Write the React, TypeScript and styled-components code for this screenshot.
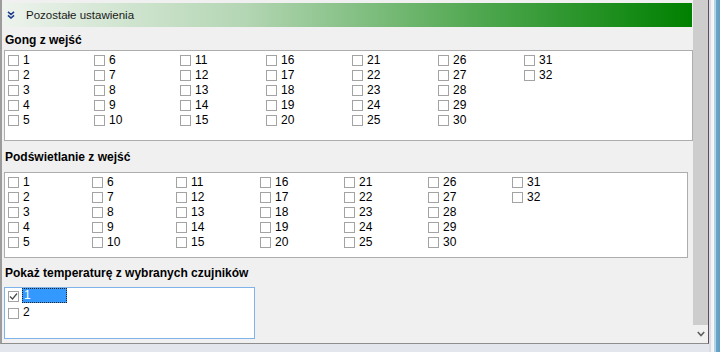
import React from "react";
import styled, { createGlobalStyle } from "styled-components";

const GlobalStyle = createGlobalStyle`
  html, body {
    margin: 0;
    padding: 0;
    background: #e3e6ec;
  }
  body {
    font-family: "Liberation Sans", Arial, sans-serif;
    font-size: 12px;
    color: #000;
  }
`;

const Window = styled.div`
  width: 720px;
  height: 352px;
  display: flex;
  overflow: hidden;
`;

const Panel = styled.div`
  width: 707px;
  height: 343px;
  display: flex;
  border-left: 2px solid #9c9c9c;
  border-bottom: 1px solid #8e8e8e;
  border-right: 1px solid #5e4c5e;
  background: #f0f0f0;
`;

const Content = styled.div`
  width: 691px;
  padding-top: 3px;
  display: flex;
  flex-direction: column;
`;

const Frame = styled.div`
  width: 11px;
  height: 352px;
  background: linear-gradient(
    to right,
    #dcdce2 0px,
    #dcdce2 2px,
    #eef1f5 2px,
    #f7f9fb 5px,
    #b4d4e6 5px,
    #b4d4e6 7px,
    #6ea6c8 7px,
    #5f9cc2 11px
  );
`;

const Header = styled.div`
  height: 24px;
  margin: 0 1px;
  display: flex;
  align-items: center;
  gap: 11px;
  padding-left: 4px;
  background: linear-gradient(to right, #edf3ed 0%, #b4d6b4 35%, #4da64d 70%, #008000 100%);
`;

const HeaderTitle = styled.span`
  font-family: "Liberation Sans", Arial, sans-serif;
  font-size: 11.5px;
  color: #1a1a1a;
`;

const Heading = styled.div<{ $top: number; $bottom: number }>`
  margin-top: ${(p) => p.$top}px;
  margin-bottom: ${(p) => p.$bottom}px;
  padding-left: 3px;
  font-weight: bold;
  font-size: 12px;
  line-height: 14px;
`;

const ListBox = styled.div<{ $width: number; $height: number; $focused?: boolean }>`
  box-sizing: border-box;
  width: ${(p) => p.$width}px;
  height: ${(p) => p.$height}px;
  margin-left: 2px;
  background: #fff;
  border: 1px solid ${(p) => (p.$focused ? "#7eb4ea" : "#adadad")};
`;

const CheckGrid = styled.div<{ $col: number }>`
  display: grid;
  grid-template-rows: repeat(5, 15px);
  grid-auto-flow: column;
  grid-auto-columns: ${(p) => p.$col}px;
  padding: 2px 0 0 3px;
`;

const CheckList = styled.div`
  display: flex;
  flex-direction: column;
  padding-left: 3px;
`;

const Item = styled.div`
  display: flex;
  align-items: center;
  gap: 4px;
  height: 15px;
  line-height: 15px;
`;

const TallItem = styled(Item)`
  height: 17px;
  align-items: flex-start;
  & > span:first-child {
    margin-top: 3px;
  }
`;

const Box = styled.span`
  box-sizing: border-box;
  width: 11px;
  height: 11px;
  border: 1px solid #a3a3a3;
  background: #fff;
  display: inline-flex;
  align-items: center;
  justify-content: center;
  flex-shrink: 0;
`;

const Label = styled.span<{ $selected?: boolean }>`
  display: inline-block;
  ${(p) =>
    p.$selected
      ? `
    box-sizing: border-box;
    width: 45px;
    height: 15px;
    margin-left: -1px;
    padding-left: 1px;
    line-height: 13px;
    background: #3399ff;
    color: #fff;
    border: 1px dotted #222;
  `
      : ""}
`;

const Scrollbar = styled.div`
  width: 15px;
  display: flex;
  flex-direction: column;
  background: #f0f0f0;
`;

const Thumb = styled.div`
  flex: 1;
  background: #cdcdcd;
`;

const Arrow = styled.div`
  height: 18px;
  display: flex;
  align-items: center;
  justify-content: center;
`;

const Check = ({ label, checked, selected, tall }: { label: string; checked?: boolean; selected?: boolean; tall?: boolean }) => {
  const Row = tall ? TallItem : Item;
  return (
    <Row>
      <Box>
        {checked && (
          <svg width="9" height="9" viewBox="0 0 9 9">
            <path d="M1 4.5 L3.5 7 L8 1.5" fill="none" stroke="#4a4a4a" strokeWidth="1.2" />
          </svg>
        )}
      </Box>
      <Label $selected={selected}>{label}</Label>
    </Row>
  );
};

const nums = Array.from({ length: 32 }, (_, i) => String(i + 1));

const App = () => {
  return (
    <>
      <GlobalStyle />
      <Window>
        <Panel>
          <Content>
            <Header>
              <svg width="8" height="8" viewBox="0 0 8 8">
                <path d="M1 0.8 L4 3.5 L7 0.8 M1 4.3 L4 7 L7 4.3" fill="none" stroke="#1f3d8c" strokeWidth="1.6" />
              </svg>
              <HeaderTitle>Pozostałe ustawienia</HeaderTitle>
            </Header>

            <Heading $top={6} $bottom={3}>Gong z wejść</Heading>
            <ListBox $width={689} $height={91}>
              <CheckGrid $col={86}>
                {nums.map((n) => (
                  <Check key={n} label={n} />
                ))}
              </CheckGrid>
            </ListBox>

            <Heading $top={9} $bottom={8}>Podświetlanie z wejść</Heading>
            <ListBox $width={684} $height={86}>
              <CheckGrid $col={84}>
                {nums.map((n) => (
                  <Check key={n} label={n} />
                ))}
              </CheckGrid>
            </ListBox>

            <Heading $top={8} $bottom={7}>Pokaż temperaturę z wybranych czujników</Heading>
            <ListBox $width={251} $height={52} $focused>
              <CheckList>
                <Check label="1" checked selected tall />
                <Check label="2" tall />
              </CheckList>
            </ListBox>
          </Content>
          <Scrollbar>
            <Thumb />
            <Arrow>
              <svg width="8" height="6" viewBox="0 0 8 6">
                <path d="M0.8 1 L4 4.5 L7.2 1" fill="none" stroke="#606060" strokeWidth="1.6" />
              </svg>
            </Arrow>
          </Scrollbar>
        </Panel>
        <Frame />
      </Window>
    </>
  );
};

export default App;
